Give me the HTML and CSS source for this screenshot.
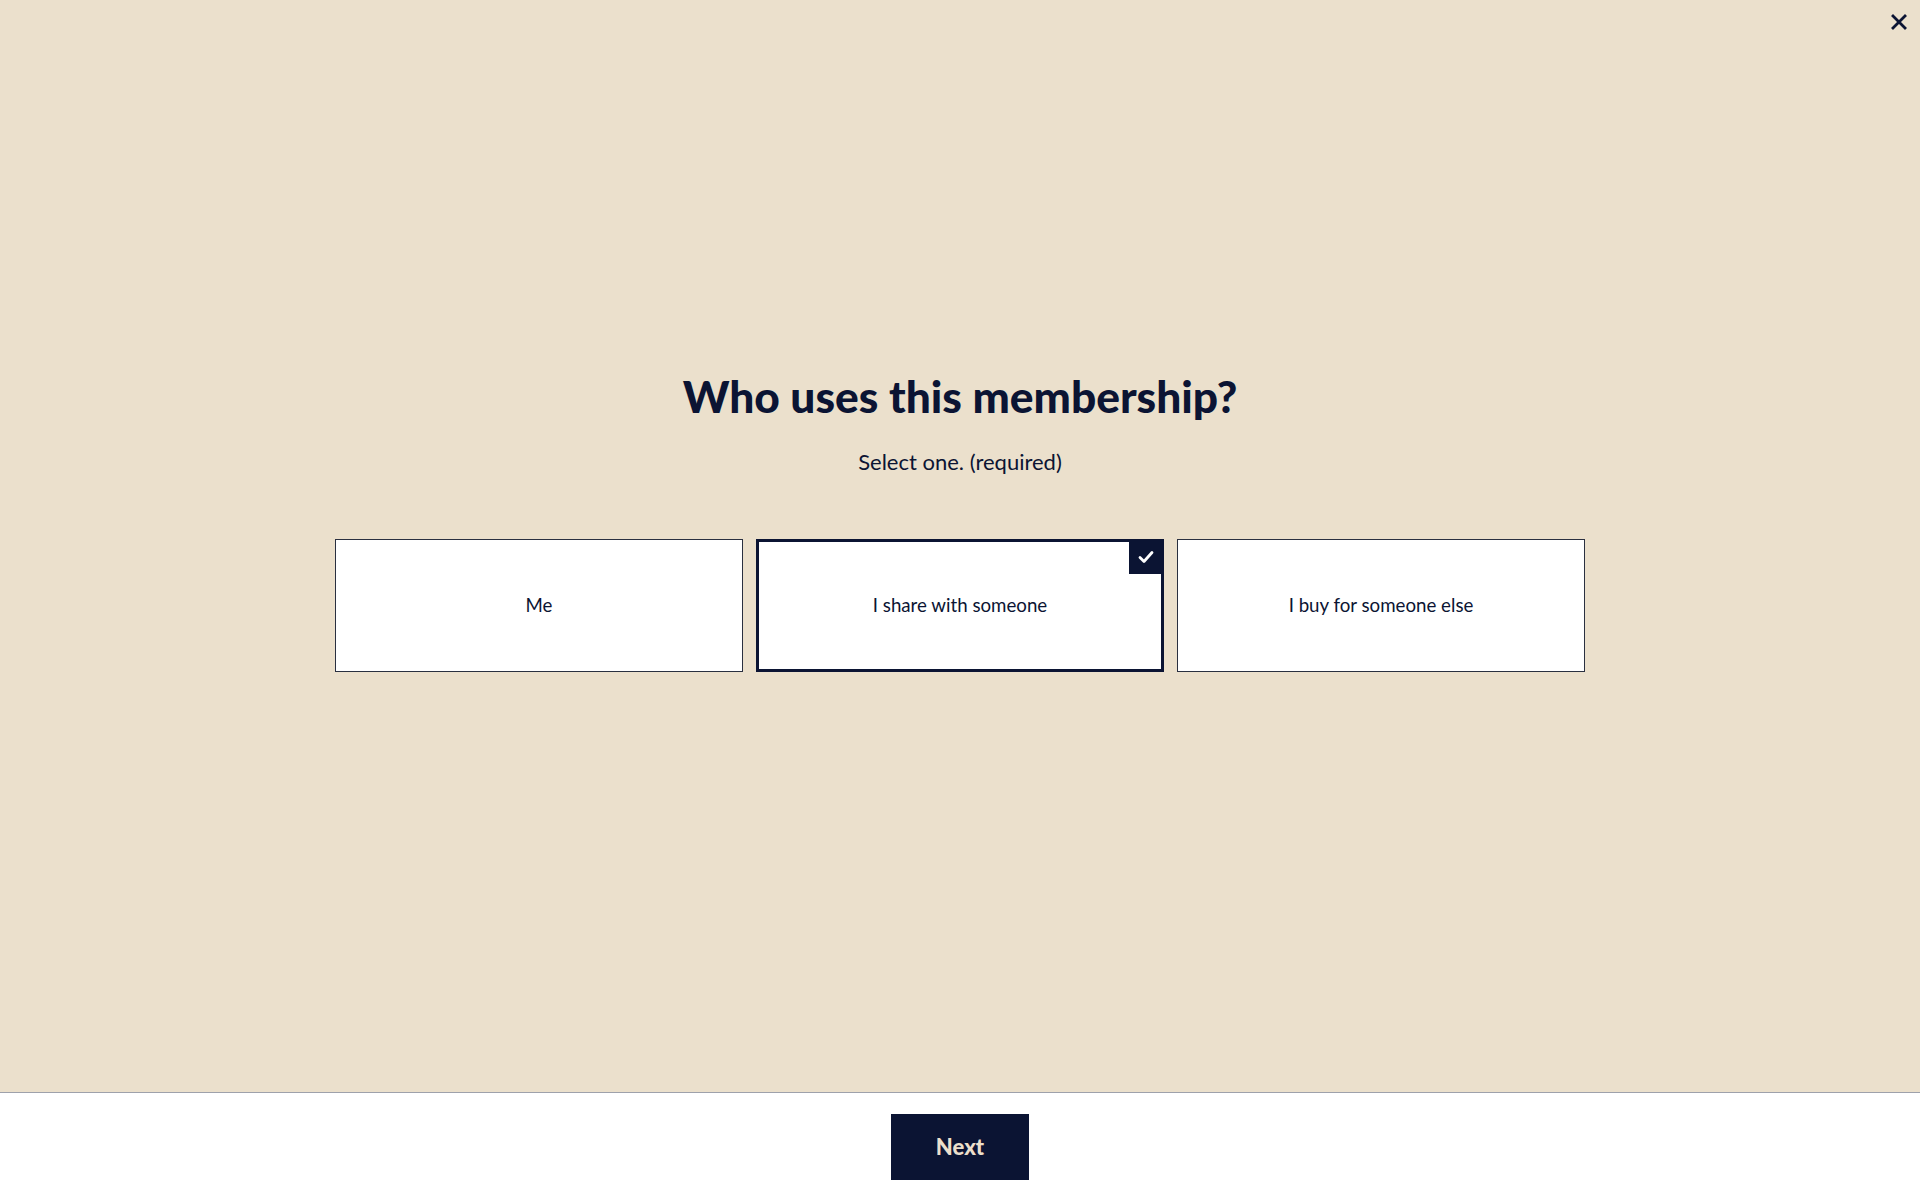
FILE: index.html
```html
<!DOCTYPE html>
<html lang="en">
<head>
<meta charset="utf-8">
<title>Who uses this membership?</title>
<link rel="stylesheet" href="styles.css">
</head>
<body>
<div class="page">
  <main class="main">
    <button class="close" aria-label="Close">
      <svg width="16" height="16" viewBox="0 0 16 16"><path d="M2 2L14 14M14 2L2 14" stroke="#0b1433" stroke-width="2.8" stroke-linecap="square" fill="none"/></svg>
    </button>
    <div class="content">
      <h1 class="title">Who uses this membership?</h1>
      <p class="subtitle">Select one. (required)</p>
      <div class="options">
        <div class="option">Me</div>
        <div class="option selected">I share with someone
          <span class="check"><svg width="18" height="16" viewBox="0 0 18 16"><path d="M3 8.5L7 12.5L15 3.5" stroke="#fff" stroke-width="2.8" fill="none" stroke-linecap="round" stroke-linejoin="round"/></svg></span>
        </div>
        <div class="option">I buy for someone else</div>
      </div>
    </div>
  </main>
  <footer class="footer">
    <button class="next">Next</button>
  </footer>
</div>
</body>
</html>
```
FILE: styles.css
```css
* { box-sizing: border-box; }
html, body { margin: 0; padding: 0; }
body {
  font-family: Lato, "Noto Sans", sans-serif;
  color: #0b1433;
}
.page {
  height: 1200px;
  display: flex;
  flex-direction: column;
}
.main {
  flex: 1;
  background: #ebe0cc;
  position: relative;
}
.close {
  position: absolute;
  top: 14px;
  right: 13px;
  width: 16px;
  height: 16px;
  padding: 0;
  border: 0;
  background: none;
  display: flex;
}
.content {
  padding-top: 369px;
  text-align: center;
}
.title {
  margin: 0;
  font-size: 44.3px;
  font-weight: 900;
  line-height: 1.2;
}
.subtitle {
  margin: 27px 0 0;
  font-size: 22px;
  line-height: 1.2;
}
.options {
  margin-top: 63px;
  display: grid;
  grid-template-columns: repeat(3, 408px);
  gap: 13px;
  justify-content: center;
}
.option {
  position: relative;
  height: 133px;
  background: #fff;
  border: 1px solid #2a3040;
  display: flex;
  align-items: center;
  justify-content: center;
  font-size: 18.7px;
}
.option.selected {
  border: 3px solid #0b1433;
}
.check {
  position: absolute;
  top: -1px;
  right: -1px;
  width: 33px;
  height: 33px;
  background: #0b1433;
  display: flex;
  align-items: center;
  justify-content: center;
}
.footer {
  height: 108px;
  border-top: 1px solid #9ea1ab;
  background: #fff;
  display: flex;
  align-items: center;
  justify-content: center;
}
.next {
  width: 138px;
  height: 66px;
  border: 0;
  background: #0b1433;
  color: #ecdfcb;
  font-family: Lato, "Noto Sans", sans-serif;
  font-weight: 900;
  font-size: 22px;
}
```
